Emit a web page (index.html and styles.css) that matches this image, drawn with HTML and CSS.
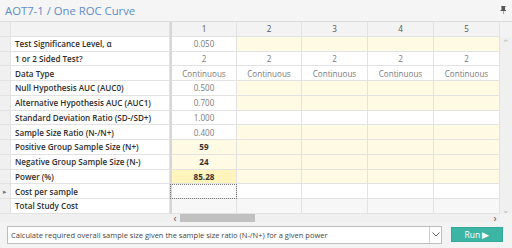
FILE: index.html
```html
<!DOCTYPE html>
<html lang="en">
<head>
    <meta charset="UTF-8">
    <title>One ROC Curve</title>
    <link rel="stylesheet" href="styles.css">
</head>
<body>
    <div class="panel">
        <div class="titlebar">
            <span class="title">AOT7-1 / One ROC Curve</span>
            <svg class="pin" width="7" height="8" viewBox="0 0 7 8">
                <path d="M1.5 0h4v1h-0.5v3h1v1h-2.5v3h-0.5v-3h-2.5v-1h1v-3h-0.5z" fill="#555"/>
            </svg>
        </div>
        <div class="body">
            <div class="grid">
                <div class="rh"></div><div class="hd"></div><div class="hd c1">1</div><div class="hd">2</div><div class="hd">3</div><div class="hd">4</div><div class="hd">5</div>

                <div class="rh"></div><div class="lb">Test Significance Level, α</div><div class="v c1">0.050</div><div class="v y"></div><div class="v y"></div><div class="v y"></div><div class="v y"></div>
                <div class="rh"></div><div class="lb">1 or 2 Sided Test?</div><div class="v c1">2</div><div class="v">2</div><div class="v">2</div><div class="v">2</div><div class="v">2</div>
                <div class="rh"></div><div class="lb">Data Type</div><div class="v c1">Continuous</div><div class="v">Continuous</div><div class="v">Continuous</div><div class="v">Continuous</div><div class="v">Continuous</div>
                <div class="rh"></div><div class="lb">Null Hypothesis AUC (AUC0)</div><div class="v c1">0.500</div><div class="v y"></div><div class="v y"></div><div class="v y"></div><div class="v y"></div>
                <div class="rh"></div><div class="lb">Alternative Hypothesis AUC (AUC1)</div><div class="v c1">0.700</div><div class="v y"></div><div class="v y"></div><div class="v y"></div><div class="v y"></div>
                <div class="rh"></div><div class="lb">Standard Deviation Ratio (SD-/SD+)</div><div class="v c1">1.000</div><div class="v"></div><div class="v"></div><div class="v"></div><div class="v"></div>
                <div class="rh"></div><div class="lb">Sample Size Ratio (N-/N+)</div><div class="v c1">0.400</div><div class="v y"></div><div class="v y"></div><div class="v y"></div><div class="v y"></div>
                <div class="rh"></div><div class="lb">Positive Group Sample Size (N+)</div><div class="v c1 y out">59</div><div class="v y"></div><div class="v y"></div><div class="v y"></div><div class="v y"></div>
                <div class="rh"></div><div class="lb">Negative Group Sample Size (N-)</div><div class="v c1 y out">24</div><div class="v y"></div><div class="v y"></div><div class="v y"></div><div class="v y"></div>
                <div class="rh"></div><div class="lb">Power (%)</div><div class="v c1 solved out">85.28</div><div class="v y"></div><div class="v y"></div><div class="v y"></div><div class="v y"></div>
                <div class="rh cur">&#9656;</div><div class="lb">Cost per sample</div><div class="v c1 sel"></div><div class="v"></div><div class="v"></div><div class="v"></div><div class="v"></div>
                <div class="rh"></div><div class="lb">Total Study Cost</div><div class="v c1 g"></div><div class="v g"></div><div class="v g"></div><div class="v g"></div><div class="v g"></div>
            </div>
            <div class="vscroll">
                <span class="arrow">&#8963;</span>
                <span class="arrow">&#8964;</span>
            </div>
        </div>
        <div class="hscroll">
            <div class="frozen"></div>
            <div class="track">
                <span class="arrow">&lsaquo;</span>
                <div class="thumb"></div>
                <span class="arrow right">&rsaquo;</span>
            </div>
        </div>
        <div class="bottom">
            <div class="select">
                <span class="sel-text">Calculate required overall sample size given the sample size ratio (N-/N+) for a given power</span>
                <span class="chev">
                    <svg width="8" height="5" viewBox="0 0 8 5"><path d="M0.5 0.5l3.5 3.5l3.5-3.5" fill="none" stroke="#666" stroke-width="1"/></svg>
                </span>
            </div>
            <button type="button" class="run">Run &#9654;</button>
        </div>
    </div>
</body>
</html>
```

FILE: styles.css
```css
*{
    margin: 0;
    padding: 0;
    box-sizing: border-box;
}
body{
    width: 512px;
    height: 248px;
    background-color: #f3f3f3;
    font-family: "Open Sans", "Noto Sans", sans-serif;
    overflow: hidden;
}
.panel{
    display: flex;
    flex-direction: column;
    height: 248px;
}
.titlebar{
    height: 21px;
    display: flex;
    align-items: center;
    justify-content: space-between;
    padding: 0 5px 0 5px;
    background-color: #f5f5f5;
}
.title{
    font-size: 11.3px;
    font-weight: 400;
    color: #5f8cc8;
}
.pin{
    margin-bottom: 1px;
}
.body{
    display: flex;
    border-top: 1px solid #dcdcdc;
}
.grid{
    display: grid;
    grid-template-columns: 11px 159px 67px 65px 66px 66px 66px;
    grid-auto-rows: 14.75px;
    background-color: #fff;
    font-size: 8.1px;
}
.grid > div{
    border-right: 1px solid #e2e2e2;
    border-bottom: 1px solid #e2e2e2;
    display: flex;
    align-items: center;
    overflow: hidden;
    white-space: nowrap;
}
.grid .rh{
    background-color: #f0f0f0;
    font-size: 7px;
    color: #777;
    justify-content: center;
}
.grid .hd{
    background-color: #f3f3f3;
    justify-content: center;
    color: #555;
}
.grid .c1{
    border-left: 2px solid #d6d6d6;
}
.grid .lb{
    padding-left: 4px;
    font-weight: 600;
    color: #2e2e2e;
}
.grid .v{
    justify-content: center;
    color: #7a7a7a;
}
.grid .y{
    background-color: #fffae3;
}
.grid .solved{
    background-color: #fff4bc;
}
.grid .out{
    color: #333;
    font-weight: 700;
}
.grid .sel{
    outline: 1px dotted #777;
    outline-offset: -1px;
}
.grid .g{
    background-color: #f7f7f7;
}
.vscroll{
    width: 12px;
    margin-top: 15px;
    background-color: #f0f0f0;
    display: flex;
    flex-direction: column;
    justify-content: space-between;
    align-items: center;
    padding: 2px 0 0 0;
}
.vscroll .arrow{
    font-size: 9px;
    line-height: 8px;
    color: #b5b5b5;
}
.hscroll{
    display: flex;
    height: 8px;
}
.hscroll .frozen{
    width: 170px;
    background-color: #f0f0f0;
}
.hscroll .track{
    width: 330px;
    display: flex;
    align-items: center;
    background-color: #f0f0f0;
}
.hscroll .arrow{
    width: 10px;
    font-size: 10px;
    line-height: 8px;
    color: #555;
    text-align: center;
}
.hscroll .thumb{
    width: 75px;
    height: 8px;
    background-color: #c1c1c1;
}
.hscroll .right{
    margin-left: auto;
}
.bottom{
    flex: 1;
    display: flex;
    align-items: center;
    padding: 0 7px 0 7px;
    gap: 9px;
}
.select{
    width: 435px;
    height: 18px;
    display: flex;
    align-items: center;
    background-color: #fff;
    border: 1px solid #bdbdbd;
    font-size: 7.5px;
    color: #444;
}
.sel-text{
    flex: 1;
    padding-left: 3px;
    white-space: nowrap;
    overflow: hidden;
}
.chev{
    width: 12px;
    height: 16px;
    border-left: 1px solid #ccc;
    display: flex;
    align-items: center;
    justify-content: center;
}
.run{
    width: 52px;
    height: 15px;
    border: 1px solid #35a898;
    background-color: #3cb5a5;
    color: #fff;
    font-family: "Open Sans", sans-serif;
    font-size: 8.5px;
}
```
